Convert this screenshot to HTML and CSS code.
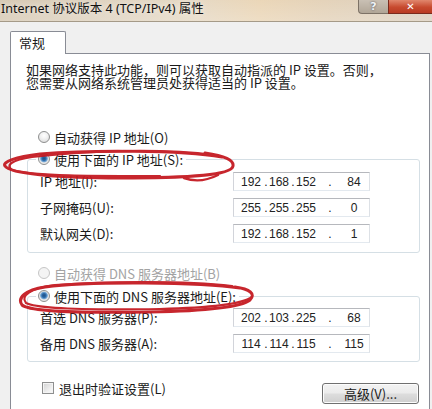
FILE: index.html
```html
<!DOCTYPE html>
<html lang="zh-CN">
<head>
<meta charset="utf-8">
<title>Internet 协议版本 4 (TCP/IPv4) 属性</title>
<link rel="stylesheet" href="styles.css">
</head>
<body>
<div class="dialog">
  <div class="titlebar">
    <span class="title">Internet 协议版本 4 (TCP/IPv4) 属性</span>
    <div class="caption-buttons">
      <span class="cap-btn help">?</span>
      <span class="cap-btn close">✕</span>
    </div>
  </div>
  <div class="frame">
    <div class="tabs"><span class="tab">常规</span></div>
    <div class="panel">
      <p class="intro"><span class="intro-line">如果网络支持此功能，则可以获取自动指派的 IP 设置。否则，</span><span class="intro-line">您需要从网络系统管理员处获得适当的 IP 设置。</span></p>

      <div class="option standalone"><span class="radio"></span><span>自动获得 IP 地址(O)</span></div>
      <div class="group group-ip">
        <div class="option legend"><span class="radio checked"></span><span>使用下面的 IP 地址(S):</span></div>
        <div class="fields">
          <span class="field-label">IP 地址(I):</span>
          <span class="ip-box"><span class="oct o1">192</span><span class="dot d1">.</span><span class="oct o2">168</span><span class="dot d2">.</span><span class="oct o3">152</span><span class="dot d3">.</span><span class="oct o4">84</span></span>
          <span class="field-label">子网掩码(U):</span>
          <span class="ip-box"><span class="oct o1">255</span><span class="dot d1">.</span><span class="oct o2">255</span><span class="dot d2">.</span><span class="oct o3">255</span><span class="dot d3">.</span><span class="oct o4">0</span></span>
          <span class="field-label">默认网关(D):</span>
          <span class="ip-box"><span class="oct o1">192</span><span class="dot d1">.</span><span class="oct o2">168</span><span class="dot d2">.</span><span class="oct o3">152</span><span class="dot d3">.</span><span class="oct o4">1</span></span>
        </div>
      </div>

      <div class="option standalone disabled dns-auto"><span class="radio"></span><span>自动获得 DNS 服务器地址(B)</span></div>
      <div class="group group-dns">
        <div class="option legend"><span class="radio checked"></span><span>使用下面的 DNS 服务器地址(E):</span></div>
        <div class="fields fields-dns">
          <span class="field-label">首选 DNS 服务器(P):</span>
          <span class="ip-box"><span class="oct o1">202</span><span class="dot d1">.</span><span class="oct o2">103</span><span class="dot d2">.</span><span class="oct o3">225</span><span class="dot d3">.</span><span class="oct o4">68</span></span>
          <span class="field-label">备用 DNS 服务器(A):</span>
          <span class="ip-box"><span class="oct o1">114</span><span class="dot d1">.</span><span class="oct o2">114</span><span class="dot d2">.</span><span class="oct o3">115</span><span class="dot d3">.</span><span class="oct o4">115</span></span>
        </div>
      </div>

      <div class="bottom-row">
        <div class="check-option"><span class="checkbox"></span><span>退出时验证设置(L)</span></div>
        <span class="button">高级(V)...</span>
      </div>
    </div>
  </div>

  <svg class="annotations" viewBox="0 0 432 409" width="432" height="409" aria-hidden="true">
    <g fill="none" stroke="#c3141c" stroke-linecap="round" stroke-linejoin="round">
      <path stroke-width="3" d="M222 157 C180 150 90 150 40 154 C15 157 2 162 5 166 C10 174 60 178 120 178 C180 178 232 176 233 166 C234 160 225 156 205 153"/>
      <path stroke-width="2.2" d="M214 155 C160 148 80 151 32 157 C12 160 5 165 12 170 C40 177 110 176 160 176"/>
      <path stroke-width="2.4" d="M184 178 C195 182 206 181 218 175"/>
      <path stroke-width="3" d="M240 288 C200 282 90 281 45 287 C25 290 17 298 22 305 C30 312 90 313 150 312 C200 311 240 308 250 300 C256 294 250 289 235 287"/>
      <path stroke-width="2.2" d="M232 286 C180 280 100 282 55 285 C30 288 20 296 26 303 C40 310 100 310 160 309 C205 308 242 304 252 297"/>
    </g>
  </svg>
</div>
</body>
</html>
```

FILE: styles.css
```css
* {
  box-sizing: border-box;
}

html, body {
  margin: 0;
  padding: 0;
  background: #f0f0f0;
}

.dialog {
  position: relative;
  width: 432px;
  height: 409px;
  overflow: hidden;
  font-family: "Noto Sans CJK SC", "Noto Sans", sans-serif;
  font-size: 13px;
  color: #1a1a1a;
}

/* ---------- title bar ---------- */
.titlebar {
  height: 22px;
  display: flex;
  justify-content: space-between;
  align-items: flex-start;
  border-bottom: 1px solid #a59a88;
  background:
    linear-gradient(180deg, rgba(255,255,255,0.08), rgba(255,255,255,0.25)),
    linear-gradient(90deg, #d3c5ae 0%, #ddd0bb 25%, #e4d6c0 45%, #e9d3b2 60%, #e2cfb4 75%, #d9cdbc 100%);
}

.title {
  padding-left: 1px;
  font-family: "Noto Sans", "Noto Sans CJK SC", sans-serif;
  font-size: 12.5px;
  line-height: 18px;
  color: #111;
  text-shadow: 0 0 6px rgba(255,255,255,0.8);
  white-space: nowrap;
}

.caption-buttons {
  display: flex;
}

.cap-btn {
  display: flex;
  align-items: center;
  justify-content: center;
  height: 14px;
  font-family: "DejaVu Sans", sans-serif;
  font-weight: bold;
  line-height: 1;
}

.help {
  width: 30px;
  font-size: 11px;
  color: #eef2f6;
  border: 1px solid #7d7266;
  border-top: none;
  border-right: none;
  border-radius: 0 0 0 4px;
  background: linear-gradient(180deg, #c9c0b4, #b1a697);
  text-shadow: 0 0 2px #445;
}

.close {
  width: 44px;
  font-size: 10px;
  color: #fff;
  border: 1px solid #7a2a1c;
  border-top: none;
  border-right: none;
  background: linear-gradient(180deg, #e0876d, #c74a2f 55%, #b83a22);
}

/* ---------- frame & tab ---------- */
.frame {
  padding: 9px 4px 0 10px;
  margin-left: -2px;
  background: #f0f0f0;
  border-left: 2px solid #d6cfc4;
}

.tabs {
  display: flex;
  height: 22px;
}

.tab {
  position: relative;
  z-index: 1;
  width: 56px;
  height: 23px;
  padding: 0 0 0 8px;
  line-height: 21px;
  background: #fff;
  border: 1px solid #898c95;
  border-bottom: none;
  border-radius: 2px 2px 0 0;
}

.panel {
  width: 420px;
  height: 400px;
  padding: 0 9px 0 16px;
  background: #fff;
  border: 1px solid #898c95;
}

.intro {
  display: flex;
  flex-direction: column;
  margin: 9px 0 0 -1px;
  white-space: nowrap;
}

.intro-line {
  height: 13px;
  line-height: 13px;
}

/* ---------- options ---------- */
.option {
  display: flex;
  align-items: center;
  gap: 4px;
  height: 16px;
  white-space: nowrap;
}

.standalone {
  margin: 40px 0 0 11px;
}

.dns-auto {
  margin-top: 12px;
}

.disabled {
  color: #a3a3a3;
}

.radio {
  flex: none;
  width: 12px;
  height: 12px;
  border-radius: 50%;
  border: 1px solid #8e8f8f;
  background: radial-gradient(circle at 50% 35%, #ffffff 0%, #f0f0f0 45%, #d4d4d4 100%);
}

.disabled .radio {
  border-color: #c6c6c6;
  background: #f4f4f4;
}

.radio.checked {
  background: radial-gradient(circle at 50% 45%, #1f4f84 0, #2d6aa8 2px, #7fb0dc 3.5px, #e4e4e4 4.2px, #f6f6f6 100%);
}

.group {
  border: 1px solid #d5dfe5;
  border-radius: 3px;
  padding: 0 12px 9px 12px;
}

.group-ip {
  margin-top: 14px;
}

.group-dns {
  margin-top: 15px;
  padding-bottom: 8px;
}

.legend {
  width: fit-content;
  margin: -9px 0 0 -4px;
  padding: 0 3px 0 2px;
  background: #fff;
}

.fields {
  display: grid;
  grid-template-columns: 193px 137px;
  row-gap: 7px;
  align-items: center;
  margin-top: 5px;
}

.fields-dns {
  margin-top: 4px;
}

.field-label {
  white-space: nowrap;
}

/* ---------- IP boxes ---------- */
.ip-box {
  display: flex;
  align-items: center;
  width: 137px;
  height: 19px;
  padding-left: 5px;
  border: 1px solid;
  border-color: #b6b8bd #dde1e6 #e3e9ef #d2d4da;
  font-family: "Liberation Sans", Arial, sans-serif;
  font-size: 12px;
  color: #222;
}

.oct, .dot {
  display: flex;
  justify-content: center;
  flex: none;
}

.o1 { width: 24px; }
.d1 { width: 6px; }
.o2 { width: 20px; }
.d2 { width: 8px; }
.o3 { width: 18px; }
.d3 { width: 30px; }
.o4 { width: 18px; }

/* ---------- bottom row ---------- */
.bottom-row {
  display: flex;
  justify-content: space-between;
  align-items: flex-start;
  margin-top: 18px;
}

.check-option {
  display: flex;
  align-items: center;
  gap: 5px;
  height: 16px;
  margin-left: 15px;
}

.checkbox {
  width: 12px;
  height: 12px;
  border: 1px solid #8e8f8f;
  background: linear-gradient(135deg, #d2d2d2, #f2f2f2 70%, #fafafa);
  box-shadow: inset 0 0 0 1px #f4f4f4;
}

.button {
  display: flex;
  align-items: center;
  justify-content: center;
  width: 97px;
  height: 21px;
  margin: 3px 1px 0 0;
  border: 1px solid #707070;
  border-radius: 3px;
  background: linear-gradient(180deg, #f3f3f3 0%, #ebebeb 48%, #dddddd 52%, #cfcfcf 100%);
  box-shadow: inset 0 0 0 1px #fcfcfc;
}

/* ---------- red hand-drawn annotation ---------- */
.annotations {
  position: absolute;
  left: 0;
  top: 0;
  pointer-events: none;
  opacity: 0.92;
}
```
